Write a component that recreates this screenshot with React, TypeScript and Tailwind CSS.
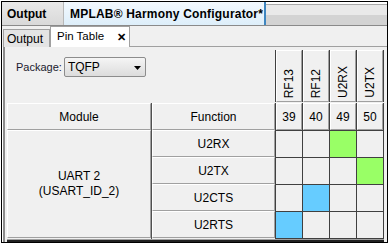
import React from "react";

const font = { fontFamily: '"Liberation Sans", Arial, sans-serif' };

const raised =
  "bg-[#f0f0f0] border-t border-l border-t-white border-l-white border-b border-r border-b-[#a0a0a0] border-r-[#a0a0a0]";

const pins = ["RF13", "RF12", "U2RX", "U2TX"];
const nums = ["39", "40", "49", "50"];
const funcs = [
  { name: "U2RX", col: 2, color: "bg-[#99ff66]" },
  { name: "U2TX", col: 3, color: "bg-[#99ff66]" },
  { name: "U2CTS", col: 1, color: "bg-[#66ccff]" },
  { name: "U2RTS", col: 0, color: "bg-[#66ccff]" },
];

export default function App() {
  return (
    <div className="w-[389px] h-[246px] bg-white pt-px pl-px pr-px pb-[3px] text-[11px] text-black" style={font}>
      <div className="w-[387px] h-[242px] border border-black flex flex-col overflow-hidden">
        {/* title bar */}
        <div className="h-[24px] flex border-b border-[#8a8a8a] shrink-0">
          <div className="w-[62px] flex items-center pl-[5px] font-bold text-[12px] bg-gradient-to-b from-[#e9e9e9] to-[#d9d9d9] border-r border-[#b8b8b8]">
            Output
          </div>
          <div className="w-[202px] flex items-center pl-[6px] font-bold text-[12px] tracking-[0.2px] bg-gradient-to-b from-[#f3f9fe] to-[#ddeefa] border-r-2 border-[#3f86c0]">
            MPLAB® Harmony Configurator*
          </div>
          <div className="flex-1 flex flex-col mt-[2px] border-t border-[#a8a8a8]">
            <div className="flex-1 bg-[#e9e9e9]" />
            <div className="flex-1 bg-[#d3d3d3]" />
          </div>
        </div>
        {/* sub tabs */}
        <div className="h-[21px] flex items-end bg-[#f0f0f0] shrink-0">
          <div className="ml-px w-[47px] h-[18px] border border-b-0 border-[#a0a0a0] bg-[#e4e4e4] flex items-center pl-[3px] text-[12px]">
            Output
          </div>
          <div className="w-[80px] h-[21px] border border-b-0 border-[#a0a0a0] bg-white flex items-center pl-[6px] text-[11.5px]">
            Pin Table
            <span className="ml-[13px] text-[11px] font-bold">✕</span>
          </div>
          <div className="flex-1 border-b border-[#a0a0a0]" />
        </div>
        {/* content */}
        <div className="flex-1 ml-px border-l-2 border-[#8c8c8c] bg-[#f0f0f0] pl-[2px] pt-[3px] flex flex-col">
          {/* header row */}
          <div className="flex h-[52px]">
            <div className="w-[268px] pl-[9px] pt-[7px]">
              <div className="flex items-center h-[20px]">
                <span className="text-[11px] text-[#1a1a2e]">Package:</span>
                <div className="ml-[2px] w-[82px] h-[20px] border border-[#8c8c8c] rounded-[2px] bg-gradient-to-b from-[#f5f5f5] to-[#dcdcdc] flex items-center pl-[3px] text-[12px] relative">
                  TQFP
                  <svg className="absolute right-[4px] top-[8px]" width="7" height="4" viewBox="0 0 7 4">
                    <polygon points="0,0 7,0 3.5,4" fill="#000" />
                  </svg>
                </div>
              </div>
            </div>
            <div className="flex border-r border-[#404040]">
              {pins.map((p) => (
                <div key={p} className="w-[27px] border-l border-[#404040] flex">
                  <div className={`flex-1 ${raised} flex items-end justify-center pb-[3px]`}>
                    <span className="[writing-mode:vertical-rl] rotate-180 text-[12px] leading-none">{p}</span>
                  </div>
                </div>
              ))}
            </div>
          </div>
          {/* number row */}
          <div className="flex h-[28px] border-t border-[#f0f0f0]">
            <div className={`w-[144px] ${raised} flex items-center justify-center text-[12px]`}>Module</div>
            <div className="w-px bg-[#505050]" />
            <div className={`w-[123px] ${raised} flex items-center justify-center text-[12px]`}>Function</div>
            <div className="flex border-r border-[#404040]">
              {nums.map((n) => (
                <div key={n} className="w-[27px] border-l border-[#404040] flex">
                  <div className={`flex-1 ${raised} flex items-center justify-center text-[12px]`}>{n}</div>
                </div>
              ))}
            </div>
          </div>
          {/* body */}
          <div className="flex">
            <div className={`w-[144px] h-[108px] ${raised} flex flex-col items-center justify-center text-[12px] leading-[15px]`}>
              <span>UART 2</span>
              <span>(USART_ID_2)</span>
            </div>
            <div className="w-px bg-[#505050]" />
            <div className="w-[123px] flex flex-col">
              {funcs.map((f) => (
                <div key={f.name} className={`h-[27px] ${raised} flex items-center justify-center text-[12px]`}>
                  {f.name}
                </div>
              ))}
            </div>
            <div className="flex flex-col border-r border-[#404040] border-t">
              {funcs.map((f) => (
                <div key={f.name} className="flex h-[27px] border-b border-[#404040]">
                  {pins.map((p, i) => (
                    <div
                      key={p}
                      className={`w-[27px] border-l border-[#404040] ${i === f.col ? f.color : "bg-[#f0f0f0]"}`}
                    />
                  ))}
                </div>
              ))}
            </div>
          </div>
          <div className="h-[1px] bg-[#a0a0a0] w-[377px]" />
          <div className="h-[2px] bg-[#202020] w-[377px]" />
        </div>
      </div>
    </div>
  );
}
